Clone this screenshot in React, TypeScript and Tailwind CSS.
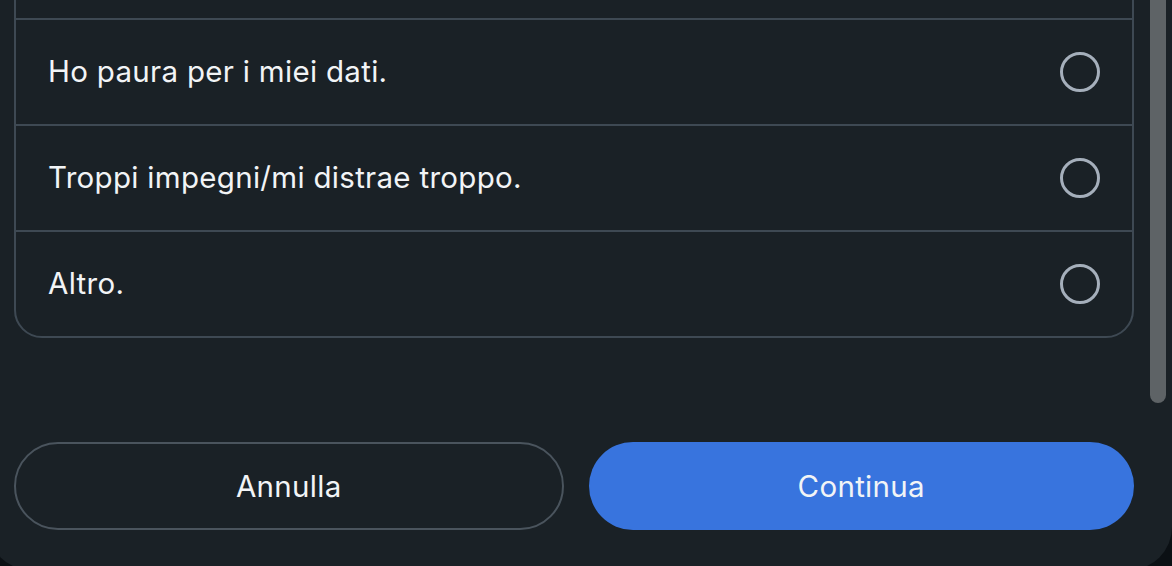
import React from "react";

const options = ["", "Ho paura per i miei dati.", "Troppi impegni/mi distrae troppo.", "Altro."];

export default function App() {
  return (
    <div
      className="relative w-[1172px] h-[566px] overflow-hidden bg-[#0b1014]"
      style={{ fontFamily: "Inter, 'Noto Sans', sans-serif" }}
    >
      <div className="ml-[-12px] w-[1184px] h-[570px] rounded-b-[43px] bg-[#1a2126] pl-[26px] flex flex-col">
        <div className="mt-[-88px] w-[1120px] border-2 border-[#3e4953] rounded-[28px] flex flex-col">
          {options.map((o, i) => (
            <div
              key={i}
              className={`${i < options.length - 1 ? "border-b-2 border-[#3e4953] h-[106px]" : "h-[104px]"} flex items-center justify-between pl-[32px] pr-[32px]`}
            >
              <span className="text-[29.5px] tracking-[0.3px] text-[#f2f4f6] leading-none">{o}</span>
              {o && (
                <span className="w-[40px] h-[40px] rounded-full border-[3px] border-[#a5afbb]" />
              )}
            </div>
          ))}
        </div>
        <div className="mt-[104px] flex gap-[25px] w-[1120px]">
          <button className="flex-1 h-[88px] rounded-full border-2 border-[#4a545d] text-[29.5px] tracking-[0.3px] text-[#f2f4f6]">
            Annulla
          </button>
          <button className="flex-1 h-[88px] rounded-full bg-[#3874de] text-[29.5px] tracking-[0.3px] text-[#f2f4f6]">
            Continua
          </button>
        </div>
      </div>
      <div className="absolute left-[1150px] top-[-20px] w-[16px] h-[423px] rounded-b-full bg-[#5e6366]" />
    </div>
  );
}
